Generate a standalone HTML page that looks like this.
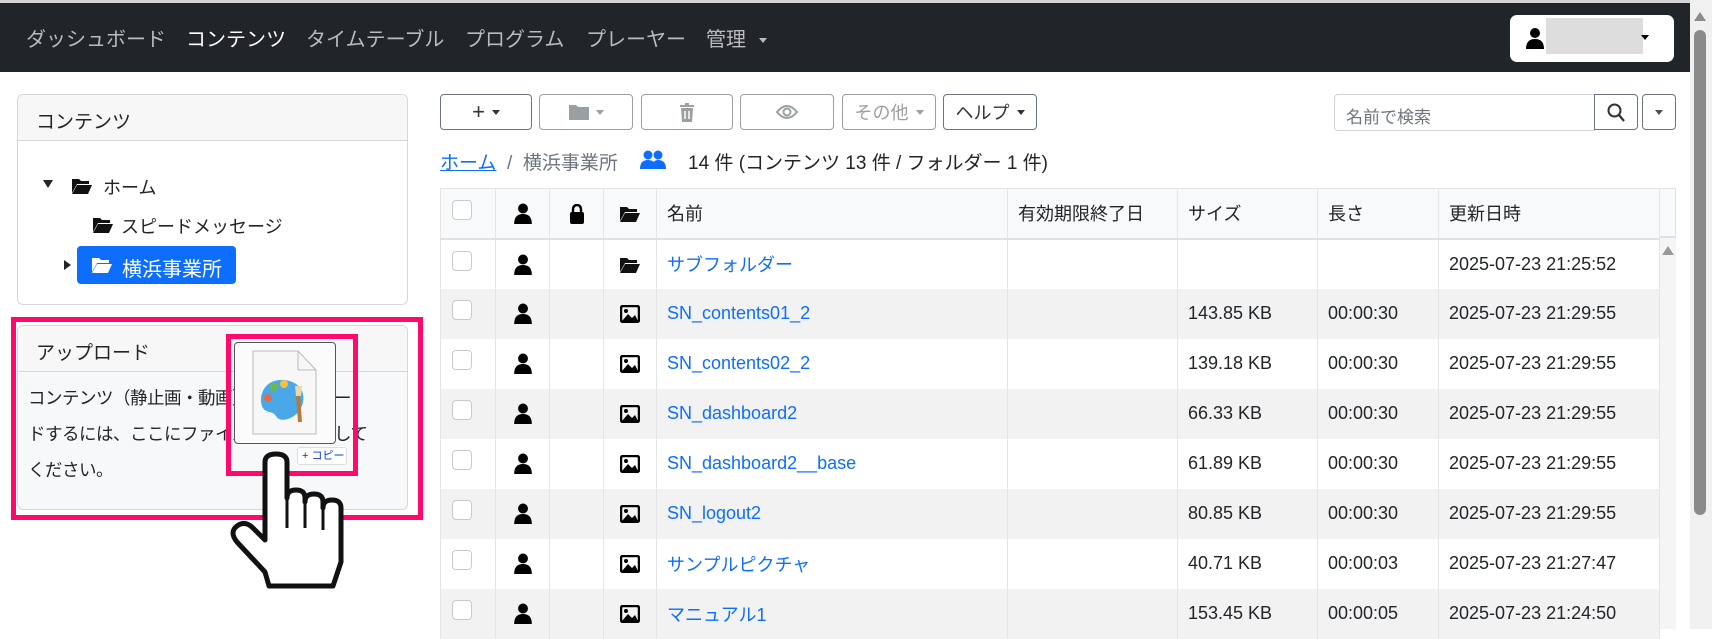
<!DOCTYPE html>
<html><head><meta charset="utf-8">
<style>
*{box-sizing:border-box;margin:0;padding:0}
body{width:1712px;height:629px;overflow:hidden;background:#fff;font-family:"Liberation Sans","Noto Sans CJK JP",sans-serif;color:#212529;position:relative}
.abs{position:absolute}
.nav{left:0;top:3px;width:1690px;height:69px;background:#212529}
.topline{left:0;top:0;width:1712px;height:3px;background:#d4d4d4}
.nav span{position:absolute;top:20px;font-size:20px;color:#b9bbbd;white-space:nowrap}
.card{border:1px solid #d5d7d9;border-radius:6px;background:#fff;overflow:hidden}
.card .hd{height:46px;background:#f7f7f7;border-bottom:1px solid #d5d7d9;font-size:19px;padding:12px 18px}
.btn{position:absolute;top:94px;height:36px;border:1px solid #6c757d;border-radius:4px;background:#fff;display:flex;align-items:center;justify-content:center;font-size:18px;color:#495057}
.car{display:inline-block;width:0;height:0;border-left:4px solid transparent;border-right:4px solid transparent;border-top:5px solid currentColor;margin-left:7px}
table{border-collapse:collapse;table-layout:fixed;font-size:18px}
td,th{height:50px;border-left:1px solid #e3e5e7;border-right:1px solid #e3e5e7;padding:0 10px;text-align:left;font-weight:normal;white-space:nowrap;vertical-align:middle;position:relative}
th{background:#f8f9fa;border-bottom:2px solid #dee2e6;border-top:1px solid #dee2e6}
tr:nth-child(odd) td{background:#f2f2f2}
.cb{position:absolute;left:11px;top:11px;width:20px;height:20px;border:1px solid #c8cbce;border-radius:4px;background:#fff}
.ic{text-align:center;padding:0}
a{color:#0d6efd;text-decoration:none}
</style></head><body>
<div class="abs topline"></div>
<div class="abs nav">
<span style="left:26px">ダッシュボード</span>
<span style="left:186px;color:#fff">コンテンツ</span>
<span style="left:306px">タイムテーブル</span>
<span style="left:465px">プログラム</span>
<span style="left:586px">プレーヤー</span>
<span style="left:706px">管理 <i class="car" style="color:#b9bbbd;vertical-align:middle"></i></span>
</div>
<div class="abs" style="left:1510px;top:15px;width:164px;height:47px;background:#fff;border-radius:7px">
<svg class="abs" style="left:16px;top:12px" width="18" height="22" viewBox="0 0 18 22"><circle cx="9" cy="6" r="5"/><path d="M0,22 Q0,12 9,12 Q18,12 18,22Z"/></svg>
<div class="abs" style="left:36px;top:3px;width:97px;height:36px;background:#ddd"></div>
<i class="car abs" style="left:124px;top:20px;color:#000"></i>
</div>
<div class="abs" style="left:1690px;top:0;width:22px;height:629px;background:#f0f0f0"></div>
<div class="abs" style="left:1694px;top:30px;width:12px;height:485px;background:#8a8a8a;border-radius:6px"></div>
<div class="abs" style="left:1694px;top:12px;border-left:6px solid transparent;border-right:6px solid transparent;border-bottom:9px solid #8a8a8a"></div>

<div class="abs card" style="left:17px;top:94px;width:391px;height:211px">
<div class="hd">コンテンツ</div>
</div>
<div class="abs" style="left:43px;top:180px;border-left:5px solid transparent;border-right:5px solid transparent;border-top:8px solid #212529"></div>
<svg class="abs" style="left:71px;top:177px" width="22" height="18" viewBox="0 0 22 18"><path d="M1,2 h7 l2,2 h8 v3 H6 L1,16Z M6,8 H21 L17,17 H1Z" fill="#111"/></svg>
<div class="abs" style="left:103px;top:174px;font-size:18px">ホーム</div>
<svg class="abs" style="left:92px;top:216px" width="22" height="18" viewBox="0 0 22 18"><path d="M1,2 h7 l2,2 h8 v3 H6 L1,16Z M6,8 H21 L17,17 H1Z" fill="#111"/></svg>
<div class="abs" style="left:121px;top:213px;font-size:18px">スピードメッセージ</div>
<div class="abs" style="left:64px;top:260px;border-top:5px solid transparent;border-bottom:5px solid transparent;border-left:7px solid #212529"></div>
<div class="abs" style="left:77px;top:246px;width:159px;height:38px;background:#0d6efd;border-radius:4px"></div>
<svg class="abs" style="left:91px;top:256px" width="22" height="18" viewBox="0 0 22 18"><path d="M1,2 h7 l2,2 h8 v3 H6 L1,16Z M6,8 H21 L17,17 H1Z" fill="#fff"/></svg>
<div class="abs" style="left:122px;top:253px;font-size:20px;color:#fff">横浜事業所</div>

<div class="abs card" style="left:17px;top:325px;width:391px;height:185px;background:#f7f8fa">
<div class="hd" style="background:#f7f7f7">アップロード</div>
<div style="padding:8px 10px;font-size:17.5px;line-height:36px;color:#212529;white-space:nowrap;letter-spacing:-0.5px">コンテンツ（静止画・動画）をアップロー<br>ドするには、ここにファイルをドロップして<br>ください。</div>
</div>
<div class="abs" style="left:11px;top:317px;width:412px;height:203px;border:5px solid #ff0a6c"></div>
<div class="abs" style="left:226px;top:334px;width:132px;height:142px;border:5px solid #ff0a6c"></div>
<div class="abs" style="left:234px;top:342px;width:102px;height:102px;border:1px solid #555;border-radius:4px;background:#fbfbfb"></div>
<svg class="abs" style="left:252px;top:350px" width="66" height="86" viewBox="0 0 66 86"><path d="M1,1 H46 L64,20 V84 H1Z" fill="#f7f7f7" stroke="#bbb"/><path d="M46,1 V20 H64" fill="none" stroke="#bbb"/><path d="M33,30 C14,28 6,44 10,56 C13,64 20,60 24,66 C27,72 36,70 42,66 C54,58 58,34 33,30Z" fill="#4aa8e8"/><circle cx="16" cy="48" r="4" fill="#e06c4c"/><circle cx="22" cy="37" r="4" fill="#70b84a"/><circle cx="32" cy="34" r="4" fill="#f3c33c"/><path d="M46,45 L48,72" stroke="#b87a3c" stroke-width="4"/><path d="M43,36 h7 l-1,10 h-5Z" fill="#e8d8b0"/></svg>
<div class="abs" style="left:297px;top:447px;width:50px;height:18px;border:1px solid #ddd;border-radius:3px;background:#fff;font-size:11px;color:#0b3bd6;padding-left:4px;line-height:16px"><span style="color:#333">+</span> コピー</div>
<svg class="abs" style="left:225px;top:450px" width="125" height="150" viewBox="0 0 125 150"><path d="M40,90 L40,12 Q40,4 51,4 Q62,4 62,12 L62,48 Q62,40 71,40 Q80,40 80,48 L80,52 Q80,44 89,44 Q98,44 98,52 L98,58 Q98,50 107,50 Q116,50 116,58 L116,112 L108,136 L44,136 L40,122 L12,92 Q4,82 12,76 Q20,70 28,78 L40,90Z" fill="#fff" stroke="#111" stroke-width="5" stroke-linejoin="round"/><path d="M62,48 V78 M80,52 V78 M98,58 V80" stroke="#111" stroke-width="3"/></svg>

<div class="btn" style="left:440px;width:92px;color:#333"><span style="font-size:22px">+</span><i class="car"></i></div>
<div class="btn" style="left:539px;width:94px;color:#9a9fa4;border-color:#9a9fa4"><svg width="20" height="16" viewBox="0 0 20 16"><path d="M0,1 h7 l2,2 h11 v13 H0Z" fill="#9a9fa4"/></svg><i class="car"></i></div>
<div class="btn" style="left:641px;width:92px;border-color:#9a9fa4"><svg width="16" height="19" viewBox="0 0 16 19"><path d="M1,3 h14 M6,1 h4" stroke="#9a9fa4" stroke-width="2"/><path d="M2,5 h12 l-1,14 H3Z" fill="#9a9fa4"/><path d="M6,8 v8 M10,8 v8" stroke="#fff" stroke-width="1.5"/></svg></div>
<div class="btn" style="left:740px;width:94px;border-color:#9a9fa4"><svg width="22" height="16" viewBox="0 0 22 16"><path d="M1,8 Q11,-4 21,8 Q11,20 1,8Z" fill="none" stroke="#9a9fa4" stroke-width="2"/><circle cx="11" cy="8" r="3.5" fill="none" stroke="#9a9fa4" stroke-width="2"/></svg></div>
<div class="btn" style="left:842px;width:94px;border-color:#9a9fa4;color:#9a9fa4">その他<i class="car"></i></div>
<div class="btn" style="left:943px;width:94px;color:#333">ヘルプ<i class="car"></i></div>
<div class="abs" style="left:1334px;top:94px;width:261px;height:37px;border:1px solid #ced4da;border-radius:4px 0 0 4px;font-size:17px;color:#6c757d;padding:8px 11px">名前で検索</div>
<div class="btn" style="left:1594px;width:44px;border-radius:0 4px 4px 0"><svg width="18" height="19" viewBox="0 0 18 19"><circle cx="7.5" cy="7.5" r="6" fill="none" stroke="#333" stroke-width="2"/><path d="M12,12 L17,18" stroke="#333" stroke-width="2.2"/></svg></div>
<div class="btn" style="left:1642px;width:34px"><i class="car" style="margin:0"></i></div>

<div class="abs" style="left:440px;top:148px;font-size:19px;white-space:nowrap"><a style="text-decoration:underline">ホーム</a> <span style="color:#6c757d">&nbsp;/&nbsp; 横浜事業所</span></div>
<svg class="abs" style="left:640px;top:150px" width="26" height="20" viewBox="0 0 26 20"><circle cx="8" cy="5" r="4.5" fill="#0d6efd"/><circle cx="18" cy="5" r="4.5" fill="#0d6efd"/><path d="M0,19 Q0,10 8,10 Q16,10 16,19Z M12,19 Q12,10 18,10 Q26,10 26,19Z" fill="#0d6efd"/></svg>
<div class="abs" style="left:688px;top:148px;font-size:19px;white-space:nowrap">14 件 (コンテンツ 13 件 / フォルダー 1 件)</div>

<div class="abs" style="left:440px;top:188px;width:1236px;height:50px;background:#f8f9fa;border:1px solid #dee2e6;border-bottom:2px solid #dee2e6"></div>
<div class="abs" style="left:1659px;top:238px;width:17px;height:391px;background:#f5f5f5"></div>
<div class="abs" style="left:1662px;top:246px;border-left:6px solid transparent;border-right:6px solid transparent;border-bottom:9px solid #999"></div>
<table class="abs" style="left:440px;top:188px;width:1219px">
<colgroup><col style="width:55px"><col style="width:54px"><col style="width:54px"><col style="width:53px"><col style="width:351px"><col style="width:170px"><col style="width:140px"><col style="width:121px"><col style="width:221px"></colgroup>
<tr><th><span class="cb"></span></th><th class="ic">P</th><th class="ic">L</th><th class="ic">F</th><th>名前</th><th>有効期限終了日</th><th>サイズ</th><th>長さ</th><th>更新日時</th></tr>
<tr><td><span class="cb"></span></td><td class="ic">P</td><td></td><td class="ic">F</td><td><a>サブフォルダー</a></td><td></td><td></td><td></td><td>2025-07-23 21:25:52</td></tr>
<tr><td><span class="cb"></span></td><td class="ic">P</td><td></td><td class="ic">I</td><td><a>SN_contents01_2</a></td><td></td><td>143.85 KB</td><td>00:00:30</td><td>2025-07-23 21:29:55</td></tr>
<tr><td><span class="cb"></span></td><td class="ic">P</td><td></td><td class="ic">I</td><td><a>SN_contents02_2</a></td><td></td><td>139.18 KB</td><td>00:00:30</td><td>2025-07-23 21:29:55</td></tr>
<tr><td><span class="cb"></span></td><td class="ic">P</td><td></td><td class="ic">I</td><td><a>SN_dashboard2</a></td><td></td><td>66.33 KB</td><td>00:00:30</td><td>2025-07-23 21:29:55</td></tr>
<tr><td><span class="cb"></span></td><td class="ic">P</td><td></td><td class="ic">I</td><td><a>SN_dashboard2__base</a></td><td></td><td>61.89 KB</td><td>00:00:30</td><td>2025-07-23 21:29:55</td></tr>
<tr><td><span class="cb"></span></td><td class="ic">P</td><td></td><td class="ic">I</td><td><a>SN_logout2</a></td><td></td><td>80.85 KB</td><td>00:00:30</td><td>2025-07-23 21:29:55</td></tr>
<tr><td><span class="cb"></span></td><td class="ic">P</td><td></td><td class="ic">I</td><td><a>サンプルピクチャ</a></td><td></td><td>40.71 KB</td><td>00:00:03</td><td>2025-07-23 21:27:47</td></tr>
<tr><td><span class="cb"></span></td><td class="ic">P</td><td></td><td class="ic">I</td><td><a>マニュアル1</a></td><td></td><td>153.45 KB</td><td>00:00:05</td><td>2025-07-23 21:24:50</td></tr>
</table>
<script>
const P='<svg width="18" height="21" viewBox="0 0 16 19" style="vertical-align:middle"><circle cx="8" cy="5" r="4.5"/><path d="M0,19 Q0,10 8,10 Q16,10 16,19Z"/></svg>';
const L='<svg width="16" height="20" viewBox="0 0 16 20" style="vertical-align:middle"><path d="M4,9 V6 Q4,1 8,1 Q12,1 12,6 V9" fill="none" stroke="#000" stroke-width="2.4"/><rect x="1" y="8" width="14" height="12" rx="2"/></svg>';
const F='<svg width="22" height="18" viewBox="0 0 22 18" style="vertical-align:middle"><path d="M1,2 h7 l2,2 h8 v3 H6 L1,16Z M6,8 H21 L17,17 H1Z" fill="#111"/></svg>';
const I='<svg width="20" height="18" viewBox="0 0 20 18" style="vertical-align:middle"><rect x="1" y="1" width="18" height="16" rx="2" fill="none" stroke="#000" stroke-width="2.5"/><circle cx="6" cy="6" r="2"/><path d="M2,16 L8,9 L12,13 L15,10 L18,16Z"/></svg>';
document.querySelectorAll('.ic').forEach(e=>{const t=e.textContent.trim();e.innerHTML={P,L,F,I}[t]||'';});
</script>
</body></html>
